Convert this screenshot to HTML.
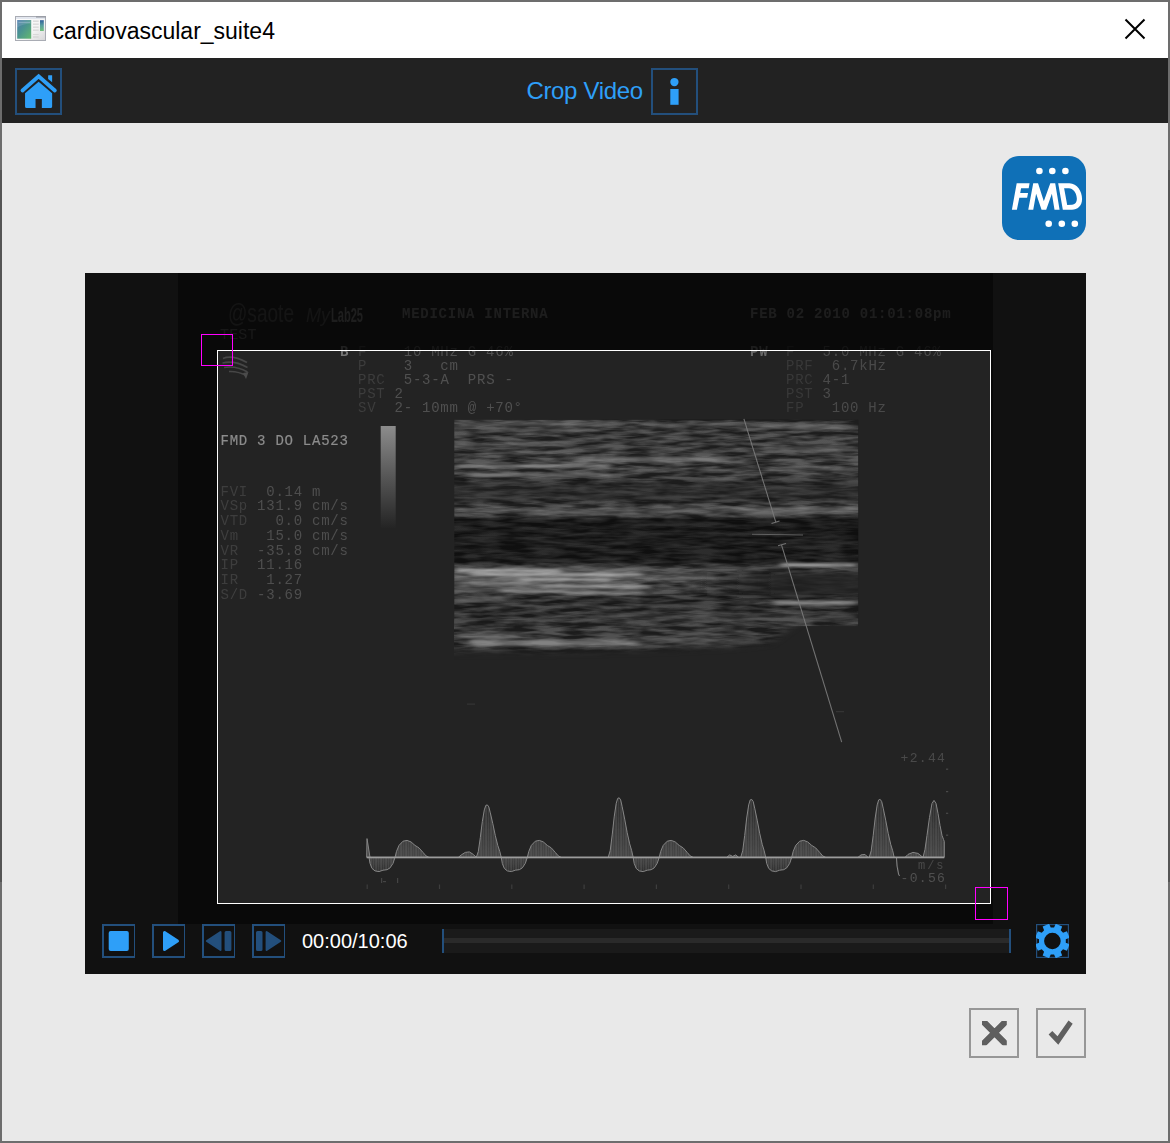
<!DOCTYPE html>
<html>
<head>
<meta charset="utf-8">
<title>cardiovascular_suite4</title>
<style>
html,body{margin:0;padding:0;}
body{width:1170px;height:1143px;overflow:hidden;background:#e9e9e9;font-family:"Liberation Sans",sans-serif;position:relative;}
.abs{position:absolute;}
#win{position:absolute;left:0;top:0;width:1170px;height:1143px;background:#e9e9e9;overflow:hidden;}
/* window borders */
.bd{position:absolute;background:#6d6d6d;}
.bdd{position:absolute;background:#555555;}
#titlebar{position:absolute;left:2px;top:2px;width:1166px;height:56px;background:#ffffff;}
#title{position:absolute;left:52.5px;top:16px;font-size:23px;line-height:30px;color:#000;white-space:nowrap;letter-spacing:0px;}
#toolbar{position:absolute;left:2px;top:58px;width:1166px;height:65px;background:#222222;}
.tbtn{position:absolute;box-sizing:border-box;border:2px solid #234f7c;}
#cropvideo{position:absolute;left:526.5px;top:76px;font-size:24px;line-height:30px;color:#2e9ff8;white-space:nowrap;letter-spacing:-0.35px;}
#video{position:absolute;left:85px;top:273px;width:1001px;height:701px;background:#111111;overflow:hidden;}
#frame{position:absolute;left:178px;top:273px;width:815px;height:651px;background:#0a0a0a;overflow:hidden;}
#crop{position:absolute;left:217px;top:350px;width:774px;height:554px;box-sizing:border-box;border:1px solid #fff;background:transparent;}
.hdl{position:absolute;width:33px;height:33px;box-sizing:border-box;border:1px solid #ff00ff;}
.vbtn{position:absolute;top:924px;width:33px;height:34px;box-sizing:border-box;border:2px solid #234f7c;border-right-width:1px;}
#time{position:absolute;left:302px;top:929px;font-size:20px;line-height:24px;color:#fff;white-space:nowrap;}
.gbtn{position:absolute;top:1008px;width:50px;height:50px;box-sizing:border-box;border:2px solid #979797;}
</style>
</head>
<body>
<div id="win">
  <div id="titlebar"></div>
  <div id="title">cardiovascular_suite4</div>
  <div id="toolbar"></div>
  <div class="tbtn" style="left:15px;top:68px;width:47px;height:47px;"></div>
  <div id="cropvideo">Crop Video</div>
  <div class="tbtn" style="left:651px;top:68px;width:47px;height:47px;"></div>

  <div id="video"></div>
  <div id="frame"></div>
  <svg class="abs" id="vsvg" style="left:0;top:0;" width="1170" height="1143" viewBox="0 0 1170 1143">
  
<defs>
  <filter id="soft" x="-5%" y="-5%" width="110%" height="110%"><feGaussianBlur stdDeviation="0.45"/></filter>
  <filter id="sblur" x="-5%" y="-20%" width="110%" height="140%"><feGaussianBlur stdDeviation="3.5 1.1"/></filter>
  <filter id="dblur" x="-10%" y="-30%" width="120%" height="160%"><feGaussianBlur stdDeviation="0 2.5"/></filter>
  <linearGradient id="dkgrad" gradientUnits="userSpaceOnUse" x1="690" y1="0" x2="775" y2="0"><stop offset="0" stop-color="#1e1e1e" stop-opacity="0"/><stop offset="1" stop-color="#1e1e1e" stop-opacity="0.8"/></linearGradient>
  <filter id="wblur" x="-2%" y="-5%" width="104%" height="110%"><feGaussianBlur stdDeviation="0.4"/></filter>
  <filter id="speckle" x="0" y="0" width="1" height="1" color-interpolation-filters="sRGB">
    <feTurbulence type="fractalNoise" baseFrequency="0.032 0.22" numOctaves="3" seed="11" result="n"/>
    <feColorMatrix in="n" type="matrix" values="2.4 0 0 0 -0.7  2.4 0 0 0 -0.7  2.4 0 0 0 -0.7  0 0 0 0 1" result="g"/>
    <feComposite in="SourceGraphic" in2="g" operator="arithmetic" k1="0.95" k2="0.5" k3="0" k4="0" result="m"/>
    <feGaussianBlur in="m" stdDeviation="0.7 0.5"/>
  </filter>
  <linearGradient id="gbar" x1="0" y1="0" x2="0" y2="1">
    <stop offset="0" stop-color="#8c8c8c"/><stop offset="0.5" stop-color="#565656"/><stop offset="0.92" stop-color="#2c2c2c"/><stop offset="1" stop-color="#242424"/>
  </linearGradient>
  <linearGradient id="bprof" gradientUnits="userSpaceOnUse" x1="0" y1="419.5" x2="0" y2="669.5"><stop offset="0.000" stop-color="rgb(60,60,60)"/><stop offset="0.070" stop-color="rgb(58,58,58)"/><stop offset="0.142" stop-color="rgb(60,60,60)"/><stop offset="0.202" stop-color="rgb(62,62,62)"/><stop offset="0.250" stop-color="rgb(51,51,51)"/><stop offset="0.322" stop-color="rgb(50,50,50)"/><stop offset="0.354" stop-color="rgb(64,64,64)"/><stop offset="0.386" stop-color="rgb(54,54,54)"/><stop offset="0.402" stop-color="rgb(29,29,29)"/><stop offset="0.570" stop-color="rgb(31,31,31)"/><stop offset="0.586" stop-color="rgb(58,58,58)"/><stop offset="0.622" stop-color="rgb(66,66,66)"/><stop offset="0.690" stop-color="rgb(58,58,58)"/><stop offset="0.714" stop-color="rgb(48,48,48)"/><stop offset="0.810" stop-color="rgb(52,52,52)"/><stop offset="0.850" stop-color="rgb(56,56,56)"/><stop offset="0.906" stop-color="rgb(56,56,56)"/><stop offset="0.938" stop-color="rgb(44,44,44)"/><stop offset="0.978" stop-color="rgb(35,35,35)"/><stop offset="1.000" stop-color="rgb(35,35,35)"/></linearGradient>
  <linearGradient id="wfill" gradientUnits="userSpaceOnUse" x1="0" y1="800" x2="0" y2="872">
    <stop offset="0" stop-color="#2c2c2c"/><stop offset="0.72" stop-color="#444444"/><stop offset="0.8" stop-color="#444444"/><stop offset="1" stop-color="#303030"/>
  </linearGradient>
  <filter id="mblur" x="-10%" y="-30%" width="120%" height="160%"><feGaussianBlur stdDeviation="4 3"/></filter>
  <clipPath id="bclip"><rect x="454.3" y="419.6" width="404" height="255"/></clipPath>
  <mask id="bmask" maskUnits="userSpaceOnUse" x="440" y="410" width="430" height="270">
    <rect x="454.3" y="419.6" width="404" height="206.5" fill="#fff"/>
    <path d="M440,620 H800 L770,642 Q700,652 440,652 Z" fill="#fff" filter="url(#mblur)"/>
  </mask>
  <pattern id="wpat" patternUnits="userSpaceOnUse" x="0" y="0" width="5" height="80">
    <rect x="0.6" y="0" width="0.9" height="80" fill="#7a7a7a" opacity="0.45"/>
    <rect x="3.1" y="0" width="0.8" height="80" fill="#6a6a6a" opacity="0.3"/>
  </pattern>
  <clipPath id="fclip"><rect x="178" y="273" width="815" height="651"/></clipPath>
</defs>

  <g clip-path="url(#fclip)">
  <g id="vid">
<rect x="178" y="273" width="815" height="651" fill="#232323"/>
<g filter="url(#soft)">
<text x="228" y="322" font-family="Liberation Sans, sans-serif" font-size="25" fill="#4a4a4a" textLength="66" lengthAdjust="spacingAndGlyphs">@saote</text>
<text x="306" y="322" font-family="Liberation Sans, sans-serif" font-size="21" font-style="italic" fill="#4a4a4a" textLength="24" lengthAdjust="spacingAndGlyphs">My</text>
<text x="331" y="322" font-family="Liberation Sans, sans-serif" font-size="21" font-weight="bold" fill="#6c6c6c" textLength="32" lengthAdjust="spacingAndGlyphs">Lab25</text>
<text x="402" y="318" font-family="Liberation Mono, monospace" font-size="14" font-weight="bold" letter-spacing="0.75" fill="#6a6a6a" style="white-space:pre" >MEDICINA INTERNA</text>
<text x="750" y="318" font-family="Liberation Mono, monospace" font-size="14" font-weight="bold" letter-spacing="0.75" fill="#6a6a6a" style="white-space:pre" >FEB 02 2010 01:01:08pm</text>
<text x="220" y="339" font-family="Liberation Mono, monospace" font-size="15" font-weight="normal" letter-spacing="0.15" fill="#585858" style="white-space:pre" >TEST</text>
<text x="340" y="356" font-family="Liberation Mono, monospace" font-size="14" font-weight="bold" letter-spacing="0.75" fill="#747474" style="white-space:pre" >B</text>
<text x="358" y="356" font-family="Liberation Mono, monospace" font-size="14" font-weight="normal" letter-spacing="0.75" fill="#505050" style="white-space:pre" ><tspan fill="#3c3c3c">F</tspan>    10 MHz G 46%</text>
<text x="358" y="370" font-family="Liberation Mono, monospace" font-size="14" font-weight="normal" letter-spacing="0.75" fill="#505050" style="white-space:pre" ><tspan fill="#3c3c3c">P</tspan>    3   cm</text>
<text x="358" y="384" font-family="Liberation Mono, monospace" font-size="14" font-weight="normal" letter-spacing="0.75" fill="#505050" style="white-space:pre" ><tspan fill="#3c3c3c">PRC</tspan>  5-3-A  PRS -</text>
<text x="358" y="398" font-family="Liberation Mono, monospace" font-size="14" font-weight="normal" letter-spacing="0.75" fill="#505050" style="white-space:pre" ><tspan fill="#3c3c3c">PST</tspan> 2</text>
<text x="358" y="412" font-family="Liberation Mono, monospace" font-size="14" font-weight="normal" letter-spacing="0.75" fill="#505050" style="white-space:pre" ><tspan fill="#3c3c3c">SV</tspan>  2- 10mm @ +70°</text>
<text x="750" y="356" font-family="Liberation Mono, monospace" font-size="14" font-weight="bold" letter-spacing="0.75" fill="#686868" style="white-space:pre" >PW</text>
<text x="786" y="356" font-family="Liberation Mono, monospace" font-size="14" font-weight="normal" letter-spacing="0.75" fill="#4a4a4a" style="white-space:pre" ><tspan fill="#383838">F</tspan>   5.0 MHz G 46%</text>
<text x="786" y="370" font-family="Liberation Mono, monospace" font-size="14" font-weight="normal" letter-spacing="0.75" fill="#4a4a4a" style="white-space:pre" ><tspan fill="#383838">PRF</tspan>  6.7kHz</text>
<text x="786" y="384" font-family="Liberation Mono, monospace" font-size="14" font-weight="normal" letter-spacing="0.75" fill="#4a4a4a" style="white-space:pre" ><tspan fill="#383838">PRC</tspan> 4-1</text>
<text x="786" y="398" font-family="Liberation Mono, monospace" font-size="14" font-weight="normal" letter-spacing="0.75" fill="#4a4a4a" style="white-space:pre" ><tspan fill="#383838">PST</tspan> 3</text>
<text x="786" y="412" font-family="Liberation Mono, monospace" font-size="14" font-weight="normal" letter-spacing="0.75" fill="#4a4a4a" style="white-space:pre" ><tspan fill="#383838">FP</tspan>   100 Hz</text>
<path d="M223,358.5 Q232,354.5 247,362.5" stroke="#464646" stroke-width="1.6" fill="none"/>
<path d="M222.5,363 Q234,360 247.5,367.5" stroke="#464646" stroke-width="1.6" fill="none"/>
<path d="M224,367.5 Q236,365.5 247.5,372" stroke="#464646" stroke-width="1.5" fill="none"/>
<path d="M229,371.5 Q238,371 247,376" stroke="#464646" stroke-width="1.4" fill="none"/>
<path d="M243,373 L248.5,372 L246,379 Z" fill="#4c4c4c"/>
<text x="220.5" y="445.3" font-family="Liberation Mono, monospace" font-size="14" font-weight="normal" letter-spacing="0.75" fill="#8c8c8c" style="white-space:pre" stroke="#8c8c8c" stroke-width="0.2">FMD 3 DO LA523</text>
<text x="220.5" y="495.6" font-family="Liberation Mono, monospace" font-size="14" font-weight="normal" letter-spacing="0.75" fill="#4e4e4e" style="white-space:pre" ><tspan fill="#3e3e3e">FVI</tspan>  0.14 m</text>
<text x="220.5" y="510.36" font-family="Liberation Mono, monospace" font-size="14" font-weight="normal" letter-spacing="0.75" fill="#4e4e4e" style="white-space:pre" ><tspan fill="#3e3e3e">VSp</tspan> 131.9 cm/s</text>
<text x="220.5" y="525.12" font-family="Liberation Mono, monospace" font-size="14" font-weight="normal" letter-spacing="0.75" fill="#4e4e4e" style="white-space:pre" ><tspan fill="#3e3e3e">VTD</tspan>   0.0 cm/s</text>
<text x="220.5" y="539.88" font-family="Liberation Mono, monospace" font-size="14" font-weight="normal" letter-spacing="0.75" fill="#4e4e4e" style="white-space:pre" ><tspan fill="#3e3e3e">Vm</tspan>   15.0 cm/s</text>
<text x="220.5" y="554.64" font-family="Liberation Mono, monospace" font-size="14" font-weight="normal" letter-spacing="0.75" fill="#4e4e4e" style="white-space:pre" ><tspan fill="#3e3e3e">VR</tspan>  -35.8 cm/s</text>
<text x="220.5" y="569.4" font-family="Liberation Mono, monospace" font-size="14" font-weight="normal" letter-spacing="0.75" fill="#4e4e4e" style="white-space:pre" ><tspan fill="#3e3e3e">IP</tspan>  11.16</text>
<text x="220.5" y="584.1600000000001" font-family="Liberation Mono, monospace" font-size="14" font-weight="normal" letter-spacing="0.75" fill="#4e4e4e" style="white-space:pre" ><tspan fill="#3e3e3e">IR</tspan>   1.27</text>
<text x="220.5" y="598.9200000000001" font-family="Liberation Mono, monospace" font-size="14" font-weight="normal" letter-spacing="0.75" fill="#4e4e4e" style="white-space:pre" ><tspan fill="#3e3e3e">S/D</tspan> -3.69</text>
</g>
<rect x="380.7" y="426" width="15" height="102" fill="url(#gbar)"/>
<g clip-path="url(#bclip)" mask="url(#bmask)">
<rect x="454" y="419.5" width="404.5" height="250" fill="url(#bprof)" filter="url(#speckle)"/>
<g filter="url(#dblur)">
<rect x="690" y="572" width="185" height="24" fill="url(#dkgrad)"/>
<rect x="440" y="483" width="440" height="17" fill="#262626" opacity="0.35"/>
</g>
<g filter="url(#sblur)">
<rect x="457" y="422" width="165" height="4" rx="2.0" fill="rgb(150,150,150)" opacity="0.37"/>
<rect x="480" y="429" width="120" height="3" rx="1.5" fill="rgb(140,140,140)" opacity="0.27"/>
<rect x="762" y="425" width="94" height="4" rx="2.0" fill="rgb(150,150,150)" opacity="0.37"/>
<rect x="640" y="423" width="120" height="3" rx="1.5" fill="rgb(120,120,120)" opacity="0.24"/>
<rect x="455" y="443" width="120" height="4" rx="2.0" fill="rgb(140,140,140)" opacity="0.32"/>
<rect x="575" y="457" width="155" height="5" rx="2.5" fill="rgb(170,170,170)" opacity="0.41"/>
<rect x="480" y="451" width="95" height="3" rx="1.5" fill="rgb(130,130,130)" opacity="0.27"/>
<rect x="762" y="446" width="94" height="5" rx="2.5" fill="rgb(140,140,140)" opacity="0.32"/>
<rect x="455" y="464" width="156" height="4" rx="2.0" fill="rgb(175,175,175)" opacity="0.46"/>
<rect x="470" y="473" width="141" height="4" rx="2.0" fill="rgb(165,165,165)" opacity="0.41"/>
<rect x="715" y="478" width="30" height="3" rx="1.5" fill="rgb(150,150,150)" opacity="0.32"/>
<rect x="766" y="467" width="90" height="4" rx="2.0" fill="rgb(140,140,140)" opacity="0.29"/>
<rect x="455" y="508" width="282" height="5" rx="2.5" fill="rgb(140,140,140)" opacity="0.27"/>
<rect x="737" y="507" width="120" height="7" rx="2.5" fill="rgb(160,160,160)" opacity="0.37"/>
<rect x="520" y="513" width="120" height="3" rx="1.5" fill="rgb(150,150,150)" opacity="0.27"/>
<rect x="455" y="567" width="185" height="26" rx="2.5" fill="rgb(150,150,150)" opacity="0.28"/>
<rect x="455" y="569" width="105" height="3" rx="1.5" fill="rgb(230,230,230)" opacity="0.55"/>
<rect x="470" y="573" width="174" height="3" rx="1.5" fill="rgb(225,225,225)" opacity="0.55"/>
<rect x="520" y="578" width="90" height="3" rx="1.5" fill="rgb(215,215,215)" opacity="0.5"/>
<rect x="470" y="582" width="70" height="3" rx="1.5" fill="rgb(190,190,190)" opacity="0.35"/>
<rect x="540" y="585" width="110" height="3" rx="1.5" fill="rgb(220,220,220)" opacity="0.5"/>
<rect x="500" y="590" width="70" height="3" rx="1.5" fill="rgb(200,200,200)" opacity="0.4"/>
<rect x="565" y="592" width="80" height="3" rx="1.5" fill="rgb(205,205,205)" opacity="0.4"/>
<rect x="644" y="573" width="71" height="7" rx="2.5" fill="rgb(150,150,150)" opacity="0.3"/>
<rect x="780" y="563" width="77" height="4" rx="2.0" fill="rgb(205,205,205)" opacity="0.55"/>
<rect x="700" y="566" width="80" height="4" rx="2.0" fill="rgb(120,120,120)" opacity="0.19"/>
<rect x="455" y="597" width="50" height="5" rx="2.5" fill="rgb(150,150,150)" opacity="0.37"/>
<rect x="773" y="601" width="84" height="4" rx="2.0" fill="rgb(200,200,200)" opacity="0.51"/>
<rect x="590" y="612" width="267" height="10" rx="2.5" fill="rgb(120,120,120)" opacity="0.17"/>
<rect x="470" y="640" width="167" height="6" rx="2.5" fill="rgb(190,190,190)" opacity="0.46"/>
<rect x="455" y="634" width="65" height="4" rx="2.0" fill="rgb(170,170,170)" opacity="0.37"/>
<rect x="637" y="636" width="123" height="8" rx="2.5" fill="rgb(120,120,120)" opacity="0.24"/>
</g>
</g>
<g stroke="#7c7c7c" stroke-width="1.1" fill="none" opacity="0.9">
<path d="M743.9,418.8 L775.8,522.2"/>
<path d="M771.5,523.5 L779.5,521"/>
<path d="M752,534.3 L803,535"  stroke="#686868"/>
<path d="M778,545.8 L786,543.5"/>
<path d="M781.5,544.8 L841.7,742.2"/>
</g>
<rect x="467" y="703.5" width="8" height="1.3" fill="#343434"/>
<rect x="836" y="711" width="8" height="1.3" fill="#343434"/>
<g filter="url(#wblur)">
<path d="M366.7,857.4 L367.0,838.6 L368.5,848.0 L370.0,857.4 Z M369.0,857.4 L370.0,863.4 L372.0,868.4 L375.0,870.9 L379.0,871.6 L383.0,870.2 L387.0,869.7 L390.0,867.9 L393.0,863.4 L395.0,857.4 Z M395.0,857.4 L396.5,851.4 L399.0,845.4 L403.0,841.2 L407.0,840.4 L411.0,841.9 L415.0,845.4 L419.0,847.9 L423.0,852.4 L426.0,855.9 L429.0,857.4 Z M458.3,857.4 L461.3,854.9 L465.3,852.4 L469.3,851.9 L473.3,854.4 L476.3,857.4 Z M476.3,857.4 L478.3,851.5 L480.3,837.6 L482.3,821.7 L484.3,809.9 L485.8,805.4 L487.3,804.9 L488.8,806.9 L490.3,812.8 L492.8,823.7 L495.3,835.6 L497.8,845.5 L499.8,851.5 L501.3,857.4 Z M501.3,857.4 L502.3,863.4 L504.3,868.4 L507.3,870.9 L511.3,871.6 L515.3,870.2 L519.3,869.7 L522.3,867.9 L525.3,863.4 L527.3,857.4 Z M527.3,857.4 L528.8,851.4 L531.3,845.4 L535.3,841.2 L539.3,840.4 L543.3,841.9 L547.3,845.4 L551.3,847.9 L555.3,852.4 L558.3,855.9 L561.3,857.4 Z M608.2,857.4 L610.2,850.7 L612.2,834.9 L614.2,816.9 L616.2,803.4 L617.7,798.4 L619.2,797.8 L620.7,800.0 L622.2,806.8 L624.7,819.2 L627.2,832.7 L629.7,843.9 L631.7,850.7 L633.2,857.4 Z M633.2,857.4 L634.2,863.4 L636.2,868.4 L639.2,870.9 L643.2,871.6 L647.2,870.2 L651.2,869.7 L654.2,867.9 L657.2,863.4 L659.2,857.4 Z M659.2,857.4 L660.7,851.4 L663.2,845.4 L667.2,841.2 L671.2,840.4 L675.2,841.9 L679.2,845.4 L683.2,847.9 L687.2,852.4 L690.2,855.9 L693.2,857.4 Z M726.7,857.4 L729.7,854.9 L732.7,856.4 L735.7,854.9 L738.7,857.4 Z M740.7,857.4 L742.7,850.8 L744.7,835.5 L746.7,818.0 L748.7,804.9 L750.2,799.9 L751.7,799.4 L753.2,801.6 L754.7,808.2 L757.2,820.2 L759.7,833.3 L762.2,844.3 L764.2,850.8 L765.7,857.4 Z M765.7,857.4 L766.7,863.4 L768.7,868.4 L771.7,870.9 L775.7,871.6 L779.7,870.2 L783.7,869.7 L786.7,867.9 L789.7,863.4 L791.7,857.4 Z M791.7,857.4 L793.2,851.4 L795.7,845.4 L799.7,841.2 L803.7,840.4 L807.7,841.9 L811.7,845.4 L815.7,847.9 L819.7,852.4 L822.7,855.9 L825.7,857.4 Z M858.0,857.4 L861.0,854.9 L865.0,854.4 L868.0,857.4 Z M869.2,857.4 L871.2,850.8 L873.2,835.5 L875.2,818.0 L877.2,804.9 L878.7,799.9 L880.2,799.4 L881.7,801.6 L883.2,808.2 L885.7,820.2 L888.2,833.3 L890.7,844.3 L892.7,850.8 L894.2,857.4 Z M896.5,857.4 L897.0,866.0 L898.5,874.0 L899.5,876.0 Z M905.0,857.4 L908.0,854.4 L913.0,852.4 L918.0,853.4 L923.0,857.4 Z M923.0,857.4 L925.0,849.4 L927.0,835.4 L929.5,817.4 L932.0,803.4 L934.0,800.4 L936.0,803.4 L938.0,813.4 L940.0,825.4 L942.0,835.4 L943.5,839.4 L944.3,841.4 L944.3,857.4 Z" fill="url(#wfill)" stroke="none"/>
<path d="M366.7,857.4 L367.0,838.6 L368.5,848.0 L370.0,857.4 Z M369.0,857.4 L370.0,863.4 L372.0,868.4 L375.0,870.9 L379.0,871.6 L383.0,870.2 L387.0,869.7 L390.0,867.9 L393.0,863.4 L395.0,857.4 Z M395.0,857.4 L396.5,851.4 L399.0,845.4 L403.0,841.2 L407.0,840.4 L411.0,841.9 L415.0,845.4 L419.0,847.9 L423.0,852.4 L426.0,855.9 L429.0,857.4 Z M458.3,857.4 L461.3,854.9 L465.3,852.4 L469.3,851.9 L473.3,854.4 L476.3,857.4 Z M476.3,857.4 L478.3,851.5 L480.3,837.6 L482.3,821.7 L484.3,809.9 L485.8,805.4 L487.3,804.9 L488.8,806.9 L490.3,812.8 L492.8,823.7 L495.3,835.6 L497.8,845.5 L499.8,851.5 L501.3,857.4 Z M501.3,857.4 L502.3,863.4 L504.3,868.4 L507.3,870.9 L511.3,871.6 L515.3,870.2 L519.3,869.7 L522.3,867.9 L525.3,863.4 L527.3,857.4 Z M527.3,857.4 L528.8,851.4 L531.3,845.4 L535.3,841.2 L539.3,840.4 L543.3,841.9 L547.3,845.4 L551.3,847.9 L555.3,852.4 L558.3,855.9 L561.3,857.4 Z M608.2,857.4 L610.2,850.7 L612.2,834.9 L614.2,816.9 L616.2,803.4 L617.7,798.4 L619.2,797.8 L620.7,800.0 L622.2,806.8 L624.7,819.2 L627.2,832.7 L629.7,843.9 L631.7,850.7 L633.2,857.4 Z M633.2,857.4 L634.2,863.4 L636.2,868.4 L639.2,870.9 L643.2,871.6 L647.2,870.2 L651.2,869.7 L654.2,867.9 L657.2,863.4 L659.2,857.4 Z M659.2,857.4 L660.7,851.4 L663.2,845.4 L667.2,841.2 L671.2,840.4 L675.2,841.9 L679.2,845.4 L683.2,847.9 L687.2,852.4 L690.2,855.9 L693.2,857.4 Z M726.7,857.4 L729.7,854.9 L732.7,856.4 L735.7,854.9 L738.7,857.4 Z M740.7,857.4 L742.7,850.8 L744.7,835.5 L746.7,818.0 L748.7,804.9 L750.2,799.9 L751.7,799.4 L753.2,801.6 L754.7,808.2 L757.2,820.2 L759.7,833.3 L762.2,844.3 L764.2,850.8 L765.7,857.4 Z M765.7,857.4 L766.7,863.4 L768.7,868.4 L771.7,870.9 L775.7,871.6 L779.7,870.2 L783.7,869.7 L786.7,867.9 L789.7,863.4 L791.7,857.4 Z M791.7,857.4 L793.2,851.4 L795.7,845.4 L799.7,841.2 L803.7,840.4 L807.7,841.9 L811.7,845.4 L815.7,847.9 L819.7,852.4 L822.7,855.9 L825.7,857.4 Z M858.0,857.4 L861.0,854.9 L865.0,854.4 L868.0,857.4 Z M869.2,857.4 L871.2,850.8 L873.2,835.5 L875.2,818.0 L877.2,804.9 L878.7,799.9 L880.2,799.4 L881.7,801.6 L883.2,808.2 L885.7,820.2 L888.2,833.3 L890.7,844.3 L892.7,850.8 L894.2,857.4 Z M896.5,857.4 L897.0,866.0 L898.5,874.0 L899.5,876.0 Z M905.0,857.4 L908.0,854.4 L913.0,852.4 L918.0,853.4 L923.0,857.4 Z M923.0,857.4 L925.0,849.4 L927.0,835.4 L929.5,817.4 L932.0,803.4 L934.0,800.4 L936.0,803.4 L938.0,813.4 L940.0,825.4 L942.0,835.4 L943.5,839.4 L944.3,841.4 L944.3,857.4 Z" fill="url(#wpat)" stroke="none"/>
<path d="M366.7,857.4 L367.0,838.6 L368.5,848.0 L370.0,857.4 M369.0,857.4 L370.0,863.4 L372.0,868.4 L375.0,870.9 L379.0,871.6 L383.0,870.2 L387.0,869.7 L390.0,867.9 L393.0,863.4 L395.0,857.4 M395.0,857.4 L396.5,851.4 L399.0,845.4 L403.0,841.2 L407.0,840.4 L411.0,841.9 L415.0,845.4 L419.0,847.9 L423.0,852.4 L426.0,855.9 L429.0,857.4 M458.3,857.4 L461.3,854.9 L465.3,852.4 L469.3,851.9 L473.3,854.4 L476.3,857.4 M476.3,857.4 L478.3,851.5 L480.3,837.6 L482.3,821.7 L484.3,809.9 L485.8,805.4 L487.3,804.9 L488.8,806.9 L490.3,812.8 L492.8,823.7 L495.3,835.6 L497.8,845.5 L499.8,851.5 L501.3,857.4 M501.3,857.4 L502.3,863.4 L504.3,868.4 L507.3,870.9 L511.3,871.6 L515.3,870.2 L519.3,869.7 L522.3,867.9 L525.3,863.4 L527.3,857.4 M527.3,857.4 L528.8,851.4 L531.3,845.4 L535.3,841.2 L539.3,840.4 L543.3,841.9 L547.3,845.4 L551.3,847.9 L555.3,852.4 L558.3,855.9 L561.3,857.4 M608.2,857.4 L610.2,850.7 L612.2,834.9 L614.2,816.9 L616.2,803.4 L617.7,798.4 L619.2,797.8 L620.7,800.0 L622.2,806.8 L624.7,819.2 L627.2,832.7 L629.7,843.9 L631.7,850.7 L633.2,857.4 M633.2,857.4 L634.2,863.4 L636.2,868.4 L639.2,870.9 L643.2,871.6 L647.2,870.2 L651.2,869.7 L654.2,867.9 L657.2,863.4 L659.2,857.4 M659.2,857.4 L660.7,851.4 L663.2,845.4 L667.2,841.2 L671.2,840.4 L675.2,841.9 L679.2,845.4 L683.2,847.9 L687.2,852.4 L690.2,855.9 L693.2,857.4 M726.7,857.4 L729.7,854.9 L732.7,856.4 L735.7,854.9 L738.7,857.4 M740.7,857.4 L742.7,850.8 L744.7,835.5 L746.7,818.0 L748.7,804.9 L750.2,799.9 L751.7,799.4 L753.2,801.6 L754.7,808.2 L757.2,820.2 L759.7,833.3 L762.2,844.3 L764.2,850.8 L765.7,857.4 M765.7,857.4 L766.7,863.4 L768.7,868.4 L771.7,870.9 L775.7,871.6 L779.7,870.2 L783.7,869.7 L786.7,867.9 L789.7,863.4 L791.7,857.4 M791.7,857.4 L793.2,851.4 L795.7,845.4 L799.7,841.2 L803.7,840.4 L807.7,841.9 L811.7,845.4 L815.7,847.9 L819.7,852.4 L822.7,855.9 L825.7,857.4 M858.0,857.4 L861.0,854.9 L865.0,854.4 L868.0,857.4 M869.2,857.4 L871.2,850.8 L873.2,835.5 L875.2,818.0 L877.2,804.9 L878.7,799.9 L880.2,799.4 L881.7,801.6 L883.2,808.2 L885.7,820.2 L888.2,833.3 L890.7,844.3 L892.7,850.8 L894.2,857.4 M896.5,857.4 L897.0,866.0 L898.5,874.0 L899.5,876.0 M905.0,857.4 L908.0,854.4 L913.0,852.4 L918.0,853.4 L923.0,857.4 M923.0,857.4 L925.0,849.4 L927.0,835.4 L929.5,817.4 L932.0,803.4 L934.0,800.4 L936.0,803.4 L938.0,813.4 L940.0,825.4 L942.0,835.4 L943.5,839.4 L944.3,841.4 L944.3,857.4" fill="none" stroke="#868686" stroke-width="1.0" stroke-linejoin="round"/>
</g>
<rect x="366.7" y="856.5" width="577.5999999999999" height="1.8" fill="#9c9c9c"/>
<rect x="366.6" y="884.5" width="1.2" height="4.5" fill="#3e3e3e"/>
<rect x="438.9" y="884.5" width="1.2" height="4.5" fill="#3e3e3e"/>
<rect x="511.2" y="884.5" width="1.2" height="4.5" fill="#3e3e3e"/>
<rect x="583.5" y="884.5" width="1.2" height="4.5" fill="#3e3e3e"/>
<rect x="655.8" y="884.5" width="1.2" height="4.5" fill="#3e3e3e"/>
<rect x="728.1" y="884.5" width="1.2" height="4.5" fill="#3e3e3e"/>
<rect x="800.4" y="884.5" width="1.2" height="4.5" fill="#3e3e3e"/>
<rect x="872.7" y="884.5" width="1.2" height="4.5" fill="#3e3e3e"/>
<rect x="945.0" y="884.5" width="1.2" height="4.5" fill="#3e3e3e"/>
<rect x="381" y="878" width="1.2" height="5" fill="#444"/><rect x="383" y="881" width="3" height="1.2" fill="#444"/><rect x="397" y="878" width="1.2" height="5" fill="#444"/>
<rect x="946" y="768.6" width="2.2" height="1.2" fill="#4a4a4a"/>
<rect x="946" y="791" width="2.2" height="1.2" fill="#4a4a4a"/>
<rect x="946" y="812.7" width="2.2" height="1.2" fill="#4a4a4a"/>
<rect x="946" y="834.6" width="2.2" height="1.2" fill="#4a4a4a"/>
<g filter="url(#soft)">
<text x="900.5" y="762" font-family="Liberation Mono, monospace" font-size="13" font-weight="normal" letter-spacing="1.35" fill="#4a4a4a" style="white-space:pre" >+2.44</text>
<text x="918" y="868.5" font-family="Liberation Mono, monospace" font-size="12" font-weight="normal" letter-spacing="1.95" fill="#484848" style="white-space:pre" >m/s</text>
<text x="900.5" y="881.5" font-family="Liberation Mono, monospace" font-size="13" font-weight="normal" letter-spacing="1.35" fill="#505050" style="white-space:pre" >-0.56</text>
</g>
</g>
  <!-- dim mask outside crop -->
  <path fill="#000" fill-opacity="0.72" fill-rule="evenodd" d="M178,273 H993 V924 H178 Z M217,350 V904 H991 V350 Z"/>
  </g>
  </svg>

  <div id="crop"></div>
  <div class="hdl" style="left:201px;top:334px;width:32px;height:32px;"></div>
  <div class="hdl" style="left:975px;top:887px;"></div>

  <div class="vbtn" style="left:102px;"></div>
  <div class="vbtn" style="left:152px;"></div>
  <div class="vbtn" style="left:202px;"></div>
  <div class="vbtn" style="left:252px;"></div>
  <div id="time">00:00/10:06</div>

  <div class="gbtn" style="left:969px;"></div>
  <div class="gbtn" style="left:1036px;"></div>


  <!-- UI icons overlay (source pixel coordinates) -->
  <svg class="abs" id="ui" style="left:0;top:0;" width="1170" height="1143" viewBox="0 0 1170 1143">
    <defs>
      <linearGradient id="gicon" x1="0" y1="0" x2="1" y2="1">
        <stop offset="0" stop-color="#4a78ad"/><stop offset="0.45" stop-color="#4a9490"/><stop offset="1" stop-color="#63b86f"/>
      </linearGradient>
      <linearGradient id="gicon2" x1="0" y1="0" x2="0" y2="1">
        <stop offset="0" stop-color="#2f5f9a"/><stop offset="0.5" stop-color="#5a9fa0"/><stop offset="1" stop-color="#6fc07a"/>
      </linearGradient>
      <linearGradient id="gwin" x1="0" y1="0" x2="1" y2="1">
        <stop offset="0" stop-color="#ffffff"/><stop offset="0.6" stop-color="#f4f4f4"/><stop offset="1" stop-color="#d6d6d8"/>
      </linearGradient>
    </defs>
    <!-- title icon -->
    <g id="ticon">
      <rect x="15.5" y="16.5" width="30" height="24" fill="url(#gwin)" stroke="#a9acb4" stroke-width="1"/>
      <rect x="16" y="17" width="29" height="2" fill="#e3e7ef"/>
      <rect x="36" y="16" width="10" height="1.6" fill="#9a9da6"/>
      <rect x="17.2" y="20" width="14" height="18.7" fill="url(#gicon)"/>
      <rect x="18.5" y="22" width="11.5" height="0.8" fill="#8fb4c8" opacity="0.7"/>
      <path d="M17.2,20 H31.2 V23.4 Q22,24 17.2,27.5 Z" fill="#ffffff" opacity="0.13"/>
      <rect x="33" y="20.4" width="5.7" height="1.6" fill="#dcdcdc"/>
      <rect x="33" y="23.4" width="5.7" height="1.6" fill="#dcdcdc"/>
      <rect x="33" y="26.4" width="5.7" height="1.6" fill="#dcdcdc"/>
      <rect x="33" y="29.4" width="5.7" height="1.6" fill="#dcdcdc"/>
      <rect x="33" y="34" width="5.7" height="0.8" fill="#d4d4d4"/>
      <rect x="33" y="36.2" width="5.7" height="1.6" fill="#d8d8d8"/>
      <rect x="40" y="20.2" width="3.8" height="10.8" fill="url(#gicon2)"/>
    </g>
    <!-- close X -->
    <path d="M1125.5,19.5 L1144.5,38.5 M1144.5,19.5 L1125.5,38.5" stroke="#000" stroke-width="2" fill="none"/>
    <!-- home icon -->
    <g fill="#2e9ff8">
      <path d="M22.5,90.5 L38.63,76.4 L54.8,90.5" fill="none" stroke="#2e9ff8" stroke-width="3.9" stroke-linecap="round" stroke-linejoin="miter"/>
      <path d="M38.63,81.85 L52.14,93.25 V106.5 Q52.14,108 50.6,108 H41.85 V99 H35.55 V108 H26.6 Q25.05,108 25.05,106.5 V93.25 Z"/>
      <path d="M48.15,75.7 Q48.15,75.2 48.65,75.2 H52.14 V82.3 L48.15,79.05 Z"/>
    </g>
    <!-- info icon -->
    <g fill="#2e9ff8">
      <circle cx="674.4" cy="82.05" r="4.15"/>
      <rect x="670.3" y="89" width="8.3" height="15.8"/>
    </g>
    <!-- FMD badge -->
    <rect x="1002" y="156" width="84" height="84" rx="17" ry="17" fill="#0f70b7"/>
    <g fill="#ffffff">
      <circle cx="1039.4" cy="171" r="3.3"/><circle cx="1052.3" cy="171" r="3.3"/><circle cx="1065.4" cy="171" r="3.3"/>
      <circle cx="1048.7" cy="223.8" r="3.3"/><circle cx="1061.8" cy="223.8" r="3.3"/><circle cx="1074.8" cy="223.8" r="3.3"/>
      <g transform="translate(995,150) scale(0.0875)">
        <path d="M248,380 L395,380 L385,437 L298,437 L288,490 L378,490 L367,545 L278,545 L250,683 L193,683 Z"/>
        <path d="M380,683 L437,380 L492,380 L558,585 L632,380 L688,380 L738,683 L680,683 L650,500 L585,683 L532,683 L470,500 L437,683 Z"/>
        <path fill-rule="evenodd" d="M722,380 L850,380 C940,385 995,470 995,560 C995,640 940,683 880,683 L775,683 Z M790,437 L825,628 L880,625 C920,620 937,590 935,550 C930,480 890,440 845,437 Z"/>
      </g>
    </g>
    <!-- video control icons -->
    <rect x="108.7" y="930.9" width="20.1" height="20" rx="2" fill="#2e9ff8"/>
    <path d="M164.5,932.5 L164.5,949.5 L177.5,941 Z" fill="#2e9ff8" stroke="#2e9ff8" stroke-width="3" stroke-linejoin="round"/>
    <g fill="#234f7c" stroke="#234f7c" stroke-width="2" stroke-linejoin="round">
      <path d="M220.5,932 L220.5,950 L206.8,941 Z"/>
      <rect x="225.6" y="932" width="4.8" height="18" rx="0.5"/>
      <rect x="257" y="932" width="4.5" height="18" rx="0.5"/>
      <path d="M266.6,932 L266.6,950 L280.3,941 Z"/>
    </g>
    <!-- seek bar -->
    <rect x="444" y="929" width="565" height="24" fill="#1a1a1a"/>
    <rect x="444" y="938" width="565" height="5" fill="#2a2a2a"/>
    <rect x="442" y="929" width="2" height="24" fill="#234f7c"/>
    <rect x="1009" y="929" width="2" height="24" fill="#234f7c"/>
    <!-- settings gear -->
    <clipPath id="gclip"><rect x="1036" y="924" width="33" height="34"/></clipPath><rect x="1036.6" y="924.6" width="31.8" height="32.8" fill="none" stroke="#234f7c" stroke-width="1.2"/>
    <path clip-path="url(#gclip)" fill="#2e9ff8" fill-rule="evenodd" d="M1065.80,942.65 L1069.58,944.34 L1066.91,950.79 L1063.04,949.31 L1060.71,951.64 L1062.19,955.51 L1055.74,958.18 L1054.05,954.40 L1050.75,954.40 L1049.06,958.18 L1042.61,955.51 L1044.09,951.64 L1041.76,949.31 L1037.89,950.79 L1035.22,944.34 L1039.00,942.65 L1039.00,939.35 L1035.22,937.66 L1037.89,931.21 L1041.76,932.69 L1044.09,930.36 L1042.61,926.49 L1049.06,923.82 L1050.75,927.60 L1054.05,927.60 L1055.74,923.82 L1062.19,926.49 L1060.71,930.36 L1063.04,932.69 L1066.91,931.21 L1069.58,937.66 L1065.80,939.35 Z M1060.70,941.00 A8.3,8.3 0 1 0 1044.10,941.00 A8.3,8.3 0 1 0 1060.70,941.00 Z"/>
    <!-- cancel / ok glyphs -->
    <g stroke="#5f5f5f" stroke-width="6.4" fill="none">
      <clipPath id="xclip"><rect x="982" y="1021" width="24.8" height="24.2"/></clipPath>
      <g clip-path="url(#xclip)"><path d="M980,1018.3 L1009,1047.3 M1009,1018.3 L980,1047.3"/></g>
    </g>
    <path d="M1048.6,1034.6 L1052.3,1030.9 L1057.5,1036.2 L1068.5,1020.5 L1072.7,1023.7 L1058.3,1044.8 Z" fill="#5f5f5f"/>
  </svg>

  <!-- window borders -->
  <div class="bd" style="left:0;top:0;width:1170px;height:2px;"></div>
  <div class="bd" style="left:0;top:1141px;width:1170px;height:2px;"></div>
  <div class="bd" style="left:0;top:0;width:2px;height:1143px;"></div>
  <div class="bd" style="left:1168px;top:0;width:2px;height:1143px;"></div>
  <div class="bdd" style="left:0;top:170px;width:2px;height:712px;"></div>
  <div class="bdd" style="left:1168px;top:170px;width:2px;height:712px;"></div>
</div>
</body>
</html>
